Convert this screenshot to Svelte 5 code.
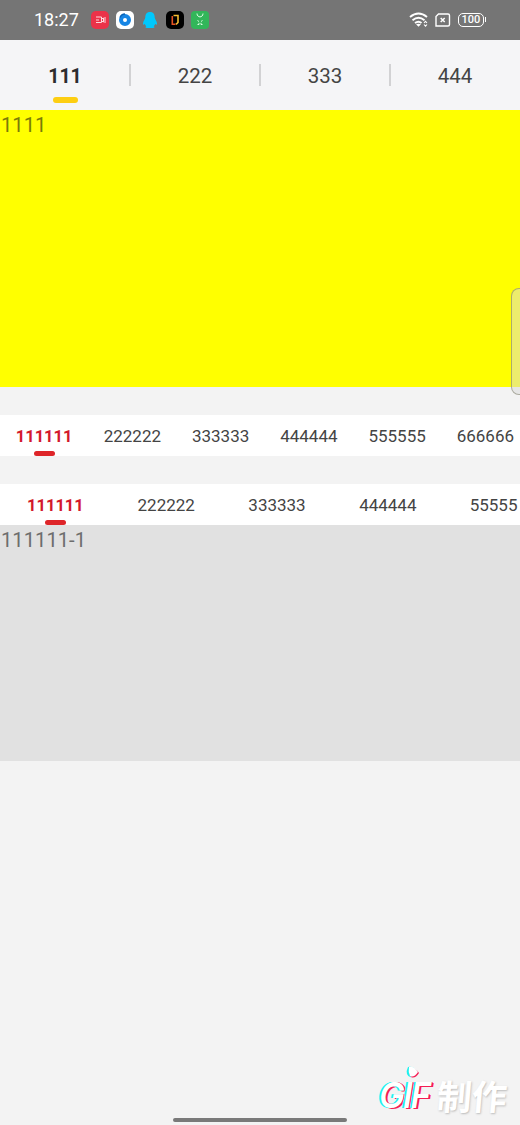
<script>
  const mainTabs = ['111', '222', '333', '444'];
  const compact = ['111111', '222222', '333333', '444444', '555555', '666666'];
  const wide = ['111111', '222222', '333333', '444444', '55555'];
</script>

<main class="screen">
  <header class="status">
    <span class="time">18:27</span>
    <div class="apps">
      <svg width="18" height="18" viewBox="0 0 18 18"><rect width="18" height="18" rx="5" fill="#eb3349"/><path d="M5 6H10.500v5.500H5M5 9h3M10.500 8l2-1v4l-2-1M14 6v6" fill="none" stroke="#ffd9dc" stroke-width="1"/></svg>
      <svg width="18" height="18" viewBox="0 0 18 18"><rect width="18" height="18" rx="5" fill="#fff"/><circle cx="9" cy="9" r="4" fill="none" stroke="#1685e4" stroke-width="4"/><path d="M4 6.500A5.500 5.500 0 0 1 9 3" fill="none" stroke="#0962b6" stroke-width="1.400"/></svg>
      <svg width="18" height="18" viewBox="0 0 18 18"><path d="M9 1C5.700 1 4.300 3.200 4.300 6.400C4.300 8 2 10 2 12.600C2 14.200 3 14 3.800 12.800C4.100 14 4.700 14.700 5.300 15.200C4 15.800 4.200 17 6 17H12C13.800 17 14 15.800 12.700 15.200C13.300 14.700 13.900 14 14.200 12.800C15 14 16 14.200 16 12.600C16 10 13.700 8 13.700 6.400C13.700 3.200 12.300 1 9 1Z" fill="#00c8fc"/></svg>
      <svg width="18" height="18" viewBox="0 0 18 18"><rect width="18" height="18" rx="5" fill="#000"/><path d="M7.500 4.500H12V11.500L10 13.300" fill="none" stroke="#f5bd32" stroke-width="1.600"/><path d="M6.300 5V13.200H9.500" fill="none" stroke="#e65322" stroke-width="1.600"/></svg>
      <svg width="18" height="18" viewBox="0 0 18 18"><rect width="18" height="18" rx="4" fill="#32b65a"/><path d="M6 2.500C6 7 12 7 12 2.500" fill="none" stroke="#d9ffe2" stroke-width="1"/><path d="M6.500 9.500l1.500 1M11.500 9.500l-1.500 1M6.500 13.500H8V11.800M11.500 13.500H10V11.800" fill="none" stroke="#d9ffe2" stroke-width="1"/></svg>
    </div>
    <div class="system">
      <svg width="20" height="16" viewBox="0 0 20 16" fill="none" stroke="#fff" stroke-width="1.900"><path d="M1 5Q9.500-2 18 5M3.500 8.200Q9.500 3.200 15.500 8.200M6 11Q9.500 8.400 12.500 11"/><path d="M7 12.300Q9.500 11 12 12.300L9.500 14.700Z" fill="#fff" stroke="none"/><path d="M15 11l1.500-1.700L18 11M15 12.500l1.500 1.700 1.500-1.700" stroke-width="1.100"/></svg>
      <svg class="sim" width="16" height="14" viewBox="0 0 16 14" fill="none" stroke="#fff"><path d="M3.500 1H13Q14.500 1 14.500 2.500V11.500Q14.500 13 13 13H1V3.500Z" stroke-width="1.400"/><path d="M5.700 5l4 4M9.700 5l-4 4" stroke-width="1.500"/></svg>
      <span class="battery">100</span>
    </div>
  </header>

  <nav class="main-tabs">
    {#each mainTabs as tab, i}
      <span class="main-tab" class:active={i === 0}>{tab}</span>
    {/each}
  </nav>
  <section class="yellow">1111</section>

  <nav class="strip compact">
    {#each compact as tab, i}
      <span class="tab" class:active={i === 0}>{tab}</span>
    {/each}
  </nav>
  <nav class="strip wide">
    {#each wide as tab, i}
      <span class="tab" class:active={i === 0}>{tab}</span>
    {/each}
  </nav>
  <section class="gray">111111-1</section>

  <div class="side-handle"></div>
  <div class="watermark">
    <span class="gif">GIF</span><span class="make">制作</span>
    <svg class="drop" width="16" height="15" viewBox="0 0 16 15"><path d="M3 1Q1 5 2 8Q4 13 9 10L12 6Q9 0 3 1Z" fill="#1df1ee"/><path d="M5 3Q4 8 6 11Q10 13 14 7Q10 1 5 3Z" fill="#f51e55"/><path d="M4 1Q3 6 5 10Q9 12 13 6Q9 0 4 1Z" fill="#fff"/></svg>
  </div>
  <div class="home"></div>
</main>

<style>
  :global(body) { background: #f3f3f3; overflow: hidden; }
  .screen { position: relative; width: 520px; height: 1125px; overflow: hidden; background: #f3f3f3; font-family: Roboto, sans-serif; color: #444; }
  .status { box-sizing: border-box; height: 40px; padding-left: 34px; padding-right: 33px; display: flex; align-items: center; background: #757575; color: #fff; }
  .time { width: 57px; font-size: 18px; line-height: 20px; }
  .apps { display: flex; gap: 7px; }
  .system { display: flex; align-items: center; margin-left: auto; }
  .sim { margin: 0 7px 0 6px; }
  .battery { position: relative; box-sizing: border-box; width: 26px; height: 14px; border: 1.500px solid #fff; border-radius: 5px; font-size: 11px; font-weight: 500; line-height: 12px; text-align: center; margin-right: 3px; }
  .battery::after { content: ''; position: absolute; right: -3px; top: 3px; width: 1px; height: 5px; background: #fff; }
  .main-tabs { display: grid; grid-template-columns: repeat(4, 130px); height: 70px; background: #f5f5f7; }
  .main-tab { position: relative; text-align: center; font-size: 20.500px; line-height: 73px; }
  .main-tab + .main-tab::before { content: ''; position: absolute; left: -1px; top: 24px; width: 2px; height: 22px; background: #d2d2d4; }
  .main-tab.active { color: #2c2c2e; font-weight: 700; font-size: 19.500px; }
  .main-tab.active::after { content: ''; position: absolute; left: 53px; top: 57px; width: 25px; height: 6px; border-radius: 3px; background: #fdce12; }
  .yellow { height: 277px; padding-left: 1px; background: #ff0; color: #7b7b08; font-size: 20.200px; line-height: 30px; }
  .strip { display: flex; height: 41px; margin-top: 28px; overflow: hidden; background: #fff; }
  .tab { position: relative; flex: none; text-align: center; font-size: 17px; line-height: 43px; }
  .compact .tab { width: 88.250px; }
  .wide .tab { width: 110.800px; }
  .wide .tab:last-child { width: 50px; padding-left: 26.500px; text-align: left; }
  .tab.active { color: #d3182c; font-weight: 700; font-size: 16.500px; }
  .tab.active::after { content: ''; position: absolute; left: 50%; margin-left: -10px; top: 36px; width: 21px; height: 5px; border-radius: 2.500px; background: #de2529; }
  .gray { height: 236px; padding-left: 1px; background: #e1e1e1; color: #6d6d6d; font-size: 20.200px; line-height: 30px; }
  .side-handle { position: absolute; left: 511px; top: 288px; width: 20px; height: 105px; border: 1px solid rgba(130, 130, 110, .6); border-radius: 8px; background: rgba(218, 218, 218, .5); }
  .watermark { position: absolute; left: 379px; top: 1066px; width: 136px; height: 50px; display: flex; align-items: flex-end; color: #fff; }
  .gif { width: 58px; font-family: Inter, sans-serif; font-size: 36px; font-weight: 600; font-style: italic; line-height: 41px; letter-spacing: -2px; text-shadow: -1px 0 #1df1ee, 1px 0 #f51e55, -2px 0 #1df1ee, 2px 1px #f51e55; transform: scaleX(.96); transform-origin: left; }
  .make { font-family: 'Noto Sans CJK SC', sans-serif; font-size: 35px; font-weight: 700; line-height: 42px; transform: skewX(-5deg); text-shadow: 1px 1px 2px #bbb; white-space: nowrap; }
  .drop { position: absolute; left: 26px; top: 0; }
  .home { position: absolute; left: 173px; top: 1118px; width: 174px; height: 4px; border-radius: 2px; background: #797979; }
</style>
